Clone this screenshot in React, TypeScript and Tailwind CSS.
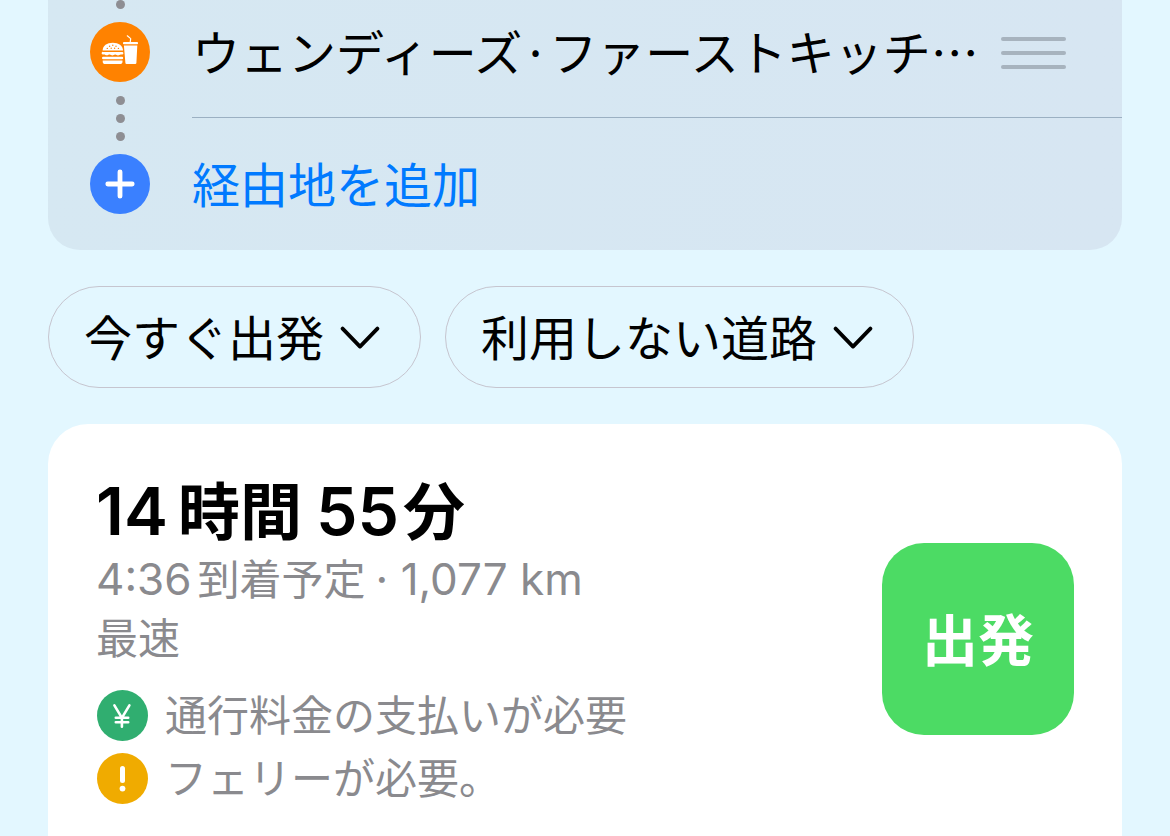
import type { ReactNode } from "react";

function Dot() {
  return <span className="size-[9px] rounded-full bg-[#8e8e93]" />;
}

function FastFoodIcon() {
  return (
    <svg viewBox="0 0 60 60" className="size-[60px]" aria-hidden="true">
      <circle cx="30" cy="30" r="30" fill="#ff8200" />
      <g fill="#fff">
        <path d="M12.6 28.6c0-4.9 4.4-7.9 10.2-7.9s10.2 3 10.2 7.9z" />
        <path d="M13.2 29.9h18.9a1.2 1.2 0 0 1 0 2.6h-1.3c-1.2 0-1.6 1-2.8 1s-1.6-1-2.8-1-1.6 1-2.8 1-1.6-1-2.8-1-1.6.8-2.8.8-1.6-.8-2.8-.8h-1.3a1.3 1.3 0 0 1 .5-2.6z" />
        <rect x="12" y="34.8" width="21.2" height="2.4" rx="1.2" />
        <path d="M12.7 38.4h19.8v1a2.7 2.7 0 0 1-2.7 2.7H15.4a2.7 2.7 0 0 1-2.7-2.7z" />
        <rect x="33" y="20.1" width="15" height="2.1" rx="0.8" />
        <path d="M33.9 23.4h13.4l-.9 17.6a1.2 1.2 0 0 1-1.2 1.1h-8.6a1.2 1.2 0 0 1-1.2-1.1z" />
      </g>
      <path d="M40.2 20.2l.5-3.6-3.4-2.8" fill="none" stroke="#fff" strokeWidth="1.2" strokeLinecap="round" strokeLinejoin="round" />
      <g fill="#ff8200">
        <circle cx="19.6" cy="24.2" r="0.7" />
        <circle cx="22.8" cy="23.2" r="0.7" />
        <circle cx="26" cy="24.2" r="0.7" />
        <circle cx="17.3" cy="26.4" r="0.7" />
        <circle cx="21.2" cy="26.2" r="0.7" />
        <circle cx="24.6" cy="26.2" r="0.7" />
        <circle cx="28.4" cy="26.4" r="0.7" />
      </g>
    </svg>
  );
}

function PlusIcon() {
  return (
    <svg viewBox="0 0 60 60" className="size-[60px]" aria-hidden="true">
      <circle cx="30" cy="30" r="30" fill="#3a80ff" />
      <path d="M30 17.8v24.4M17.8 30h24.4" stroke="#fff" strokeWidth="4.8" strokeLinecap="round" />
    </svg>
  );
}

function Chevron() {
  return (
    <svg viewBox="0 0 40 24" className="h-6 w-10" fill="none" stroke="#000" strokeWidth="3.8" strokeLinecap="round" strokeLinejoin="round" aria-hidden="true">
      <path d="M2.6 3.6L20 21.6 37.4 3.6" />
    </svg>
  );
}

function YenIcon() {
  return (
    <svg viewBox="0 0 51 51" className="size-[51px]" aria-hidden="true">
      <circle cx="25.5" cy="25.5" r="25.5" fill="#30ae70" />
      <path d="M17.4 15.4l7.5 12.4 7.5-12.4M24.9 27.8v9M18.8 27.8h12.4M18.8 32.2h12.4" fill="none" stroke="#fff" strokeWidth="2.6" strokeLinecap="round" strokeLinejoin="round" />
    </svg>
  );
}

function WarningIcon() {
  return (
    <svg viewBox="0 0 51 51" className="size-[51px]" aria-hidden="true">
      <circle cx="25.5" cy="25.5" r="25.5" fill="#f0ab00" />
      <path d="M25.5 15.4v12" stroke="#fff" strokeWidth="5" strokeLinecap="round" />
      <circle cx="25.5" cy="35.6" r="2.9" fill="#fff" />
    </svg>
  );
}

function Pill({ children }: { children: ReactNode }) {
  return (
    <button type="button" className="flex h-[102px] items-center gap-4 rounded-full border border-[#c6c5cf] pr-10 pl-[35px] whitespace-nowrap">
      <span className="pb-1">{children}</span>
      <Chevron />
    </button>
  );
}

function Notice({ icon, children }: { icon: ReactNode; children: ReactNode }) {
  return (
    <li className="flex h-[51px] items-center gap-[17px]">
      {icon}
      <span>{children}</span>
    </li>
  );
}

export default function App() {
  return (
    <main className="flex min-h-screen flex-col bg-[#e3f7ff] px-12 font-['Noto_Sans_CJK_JP',sans-serif] text-[48px] leading-none text-black">
      <section className="flex gap-[42px] rounded-b-[32px] bg-linear-to-r from-[#d6e8f2] to-[#d7e6f2] pl-[42px]">
        <div className="flex flex-col items-center pb-9">
          <Dot />
          <div className="mt-[13px]">
            <FastFoodIcon />
          </div>
          <div className="flex flex-col gap-[9px] pt-[14px] pb-[13px]">
            <Dot />
            <Dot />
            <Dot />
          </div>
          <PlusIcon />
        </div>
        <div className="min-w-0 flex-1">
          <div className="flex h-[118px] items-center justify-between border-b border-[#9bb0c2] pr-14 pb-[11px]">
            <p className="pb-1.5 whitespace-nowrap">ウェンディーズ·ファーストキッチ…</p>
            <button type="button" aria-label="並べ替え" className="flex w-[65px] flex-col gap-[10px]">
              <span className="h-1 rounded-full bg-[#a7b3be]" />
              <span className="h-1 rounded-full bg-[#a7b3be]" />
              <span className="h-1 rounded-full bg-[#a7b3be]" />
            </button>
          </div>
          <button type="button" className="flex h-[132px] w-full items-center pb-1 text-[#007aff]">
            経由地を追加
          </button>
        </div>
      </section>

      <div className="mt-9 flex gap-6">
        <Pill>今すぐ出発</Pill>
        <Pill>利用しない道路</Pill>
      </div>

      <section className="mt-9 flex flex-1 items-start rounded-t-[40px] bg-white px-12 pt-[50px]">
        <div className="flex flex-1 items-center justify-between pb-8">
          <div className="font-[Inter,'Noto_Sans_CJK_JP',sans-serif] text-[42px] text-[#8a8a8e]">
            <h1 className="flex h-[75px] items-baseline text-[62px] leading-[75px] font-semibold text-black">
              <span className="text-[66px]">14</span>
              <span className="ml-2.5">時間</span>
              <span className="ml-3.5 text-[66px]">55</span>
              <span className="ml-1">分</span>
            </h1>
            <p className="flex h-[60px] items-baseline leading-[60px]">
              <span className="text-[44px]">4:36</span>
              <span className="ml-1.5">到着予定</span>
              <span className="ml-2.5 text-[44px]">· 1,077 km</span>
            </p>
            <p className="leading-[60px]">最速</p>
            <ul className="mt-[21px] flex flex-col gap-3 pl-px">
              <Notice icon={<YenIcon />}>通行料金の支払いが必要</Notice>
              <Notice icon={<WarningIcon />}>フェリーが必要。</Notice>
            </ul>
          </div>
          <button type="button" className="size-48 rounded-[42px] bg-[#4cdb64] pb-1 text-[56px] font-bold text-white">
            出発
          </button>
        </div>
      </section>
    </main>
  );
}
